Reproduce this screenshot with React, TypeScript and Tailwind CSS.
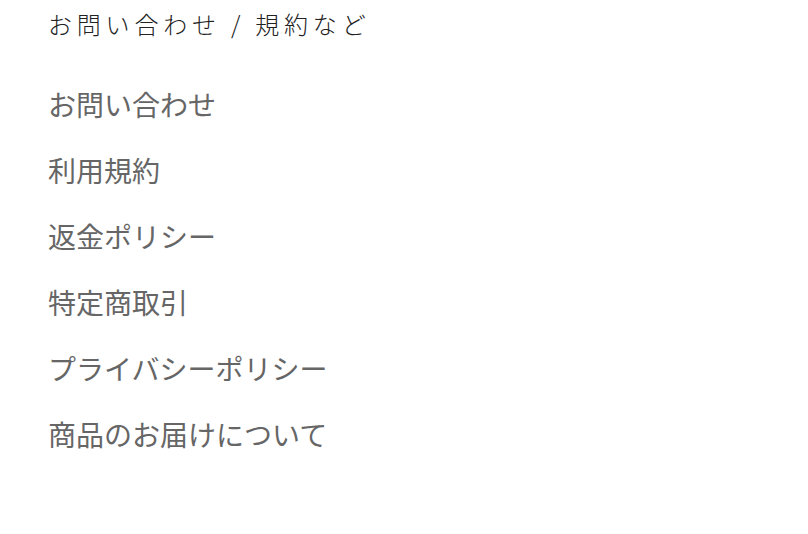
const links = [
  "お問い合わせ",
  "利用規約",
  "返金ポリシー",
  "特定商取引",
  "プライバシーポリシー",
  "商品のお届けについて",
];

export default function App() {
  return (
    <div
      className="min-h-[534px] bg-white px-[48px] pt-[9px]"
      style={{ fontFamily: '"Noto Sans CJK JP", "Noto Sans", sans-serif' }}
    >
      <h2 className="text-[24px] font-light leading-[30px] tracking-[0.2em] text-[#222]">
        お問い合わせ / 規約など
      </h2>
      <ul className="mt-[44px] flex flex-col gap-[24px]">
        {links.map((label) => (
          <li key={label}>
            <a href="#" className="block text-[28px] leading-[42px] text-[#666]">
              {label}
            </a>
          </li>
        ))}
      </ul>
    </div>
  );
}
